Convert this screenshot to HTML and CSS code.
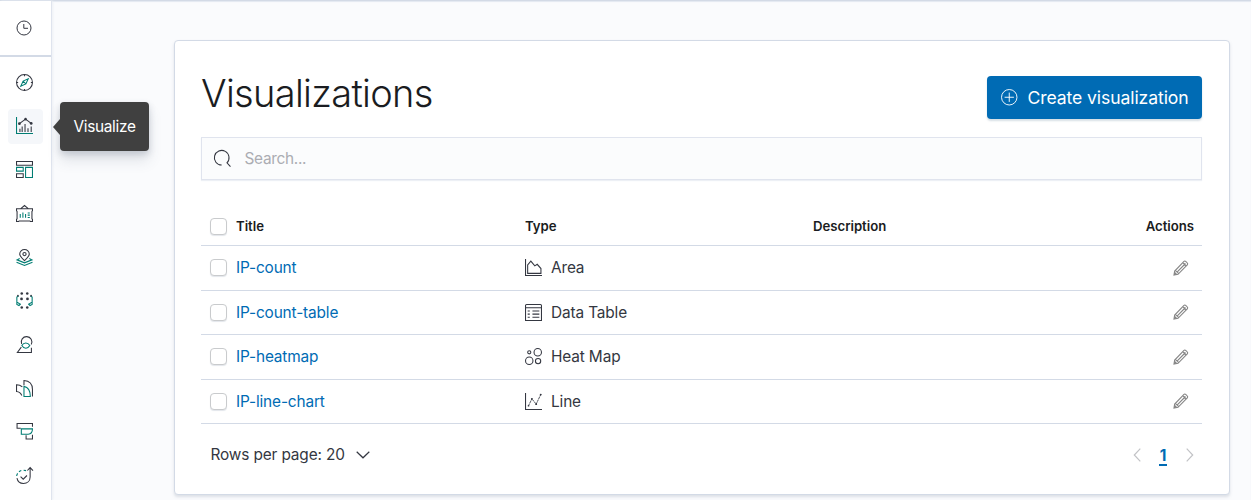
FILE: index.html
```html
<!DOCTYPE html>
<html lang="en">
<head>
<meta charset="utf-8">
<title>Visualizations</title>
<link rel="stylesheet" href="styles.css">
</head>
<body>
<div class="app">
  <nav class="sidebar">
    <div class="recent"><svg class="icon clock" viewBox="0 0 16 16"><circle cx="8" cy="8" r="7"/><path d="M7.800 4v4.300H12"/></svg></div>
    <div class="nav-list">
      <a class="nav-item"><svg class="icon" viewBox="0 0 16 16"><circle cx="8" cy="8" r="7.500"/><path d="M8 .5V2M8 14v1.500M.5 8H2M14 8h1.500"/><path class="accent" d="M11.500 4.500 9.300 9.300 4.500 11.500 6.700 6.700zM6.700 6.700l2.600 2.600"/></svg></a>
      <a class="nav-item active"><svg class="icon" viewBox="0 0 16 16"><path class="accent" d="M.5 0v15.500H16"/><path d="M3.700 11V14M8.500 6.500V14M5.800 9v5M11.300 10.500V14M14.300 9v5M3.200 6.300 9 2l5.300 4"/><g class="dots"><circle cx="3.200" cy="6.300" r="1.300"/><circle cx="9" cy="2" r="1.200"/><circle cx="14.300" cy="6" r="1.300"/></g></svg>
        <span class="tooltip">Visualize</span></a>
      <a class="nav-item"><svg class="icon" viewBox="0 0 16 16"><path d="M.5.500h15v3.500H.5zM.5 12h6.300v3.500H.5z"/><path class="accent" d="M.5 6h6.300v3.500H.5zM9 6h6.500v9.500H9z"/></svg></a>
      <a class="nav-item"><svg class="icon" viewBox="0 0 16 16"><path d="M.5 3.500h15v2L15 6v7l.5.500v2h-2L13 15H3l-.5.500h-2v-2L1 13V6l-.5-.5zM4.500 3.500 8 .5l3.500 3"/><path class="accent" d="M4 8.500V12M6.500 7v5M9 8.500V12M11 7.500h2M11 9.500h2M11 11.700h2"/></svg></a>
      <a class="nav-item"><svg class="icon" viewBox="0 0 16 16"><path d="M8 11C5.500 8.500 3.500 7 3.500 4.800a4.500 4.300 0 0 1 9 0C12.500 7 10.500 8.500 8 11z"/><circle cx="8" cy="4.800" r="1.500"/><path class="accent" d="M3.500 9 1 10.200 8 13l7-2.800L12.500 9M.5 12.500 8 15.500l7.500-3"/></svg></a>
      <a class="nav-item"><svg class="icon" viewBox="0 0 16 16"><path class="accent" d="M2.500 3.700.8 4.700v7l2 1 1.700-1.500M13.500 3.700l1.700 1v7l-2 1-1.700-1.500M1 9.500l3 2M15 9.500l-3 2"/><g class="dots"><circle cx="5.400" cy="1.400" r="1.200"/><circle cx="10.600" cy="1.400" r="1.200"/><circle cx="5.200" cy="6.500" r="1.300"/><circle cx="10.800" cy="6.500" r="1.300"/><circle cx="5.400" cy="14.500" r="1.200"/><circle cx="10.600" cy="14.500" r="1.200"/><circle cx="1.800" cy="3.500" r=".8"/><circle cx="14.200" cy="3.500" r=".8"/></g></svg></a>
      <a class="nav-item"><svg class="icon" viewBox="0 0 16 16"><path d="M5.300 7.500A5 5 0 1 1 14.300 8M5 10.500l-3.700 5h13.200V11"/><path class="accent" d="M5.500 9c1-1.700 2.300-2.500 3.700-2.500S12 7.300 13 9c-1 1.800-2.300 2.500-3.700 2.500S6.500 10.800 5.500 9z"/></svg></a>
      <a class="nav-item"><svg class="icon" viewBox="0 0 16 16"><path d="M5.500 14.500C4.500 12.300 2.700 11 .5 10.800V4.500c2.300 0 4 .7 5.500 2M7.500 5V.5c5 .3 8 3.500 8 8.500v6.500"/><path class="accent" d="M7.500 6c3.800.8 6 4 6 9.500h-6z"/></svg></a>
      <a class="nav-item"><svg class="icon" viewBox="0 0 16 16"><path d="M15.500 3.500V.5H1v4.500h3.500M9.500 11.500v3.500h6v-4"/><path class="accent" d="M5 5.500h10.500C15.500 8.500 14 10.500 11.500 10.500H5z"/></svg></a>
      <a class="nav-item"><svg class="icon" viewBox="0 0 16 16"><path d="M.9 10.500A6.200 6.200 0 0 0 7 15.500c3.700 0 6.300-2.500 6.300-6V.5M10.700 3.300 13.300.5 16 3.300M4.300 9l2.500 2.500L10.300 8"/><path class="accent" d="M.6 8.500A6 6 0 0 1 1.500 6M2.800 4.600A6 6 0 0 1 5 3.300M7.200 3l2.300.4"/></svg></a>
    </div>
  </nav>
  <main class="page">
    <section class="panel">
      <header class="panel-head">
        <h1>Visualizations</h1>
        <button class="create"><svg class="icon" viewBox="0 0 16 16"><circle cx="8" cy="8" r="7.500"/><path d="M8 3.500v9M3.500 8h9"/></svg><span>Create visualization</span></button>
      </header>
      <label class="search"><svg class="icon" viewBox="0 0 16 16"><path d="M7.200 14.200A6.900 6.900 0 1 1 12.200 12.100L15.500 15.700"/></svg><span>Search...</span></label>
      <div class="table">
        <div class="row head"><i class="check"></i><span>Title</span><span>Type</span><span>Description</span><span class="actions">Actions</span></div>
        <div class="row"><i class="check"></i><a>IP-count</a><span class="type"><svg class="icon" viewBox="0 0 16 16"><path d="M.5 0v15.500H16M2.500 13.500v-8l3-3.500 3.700 4.500L11.500 5l3.500 4v4.500z"/></svg><span>Area</span></span><span></span><svg class="icon pencil" viewBox="0 0 16 16"><path d="M1 15l.7-4L11 1.300c1-1 4.500 2 3.500 3.400L5 14.300zM3.800 12.300l8.700-8.800M2.500 10.300l3.200 3.300M9.800 2.700l3.500 3.500"/><path class="tip" d="m1 15 .5-3.500 3 3z"/></svg></div>
        <div class="row"><i class="check"></i><a>IP-count-table</a><span class="type"><svg class="icon" viewBox="0 0 16 16"><path d="M1.500.500h13a1 1 0 0 1 1 1v14H.5v-14a1 1 0 0 1 1-1zM.5 3.500h15M2.500 6.500h2M7 6.500h6.500M2.500 9.500h2M7 9.500h6.500M2.500 12.500h2M7 12.500h6.500"/></svg><span>Data Table</span></span><span></span><svg class="icon pencil" viewBox="0 0 16 16"><path d="M1 15l.7-4L11 1.300c1-1 4.500 2 3.500 3.400L5 14.300zM3.800 12.300l8.700-8.800M2.500 10.300l3.200 3.300M9.800 2.700l3.500 3.500"/><path class="tip" d="m1 15 .5-3.500 3 3z"/></svg></div>
        <div class="row"><i class="check"></i><a>IP-heatmap</a><span class="type"><svg class="icon" viewBox="0 0 16 16"><circle cx="4" cy="4" r="1.500"/><circle cx="12" cy="4" r="3.500"/><circle cx="4" cy="12" r="3.500"/><circle cx="12.300" cy="12.300" r="2.500"/></svg><span>Heat Map</span></span><span></span><svg class="icon pencil" viewBox="0 0 16 16"><path d="M1 15l.7-4L11 1.300c1-1 4.500 2 3.500 3.400L5 14.300zM3.800 12.300l8.700-8.800M2.500 10.300l3.200 3.300M9.800 2.700l3.500 3.500"/><path class="tip" d="m1 15 .5-3.500 3 3z"/></svg></div>
        <div class="row"><i class="check"></i><a>IP-line-chart</a><span class="type"><svg class="icon" viewBox="0 0 16 16"><path d="M.5 0v15.500H16"/><path class="trend" d="M3.300 12l3.200-6.500 4 5L14.800 1.500"/><g class="dots"><circle cx="3.300" cy="12" r=".8"/><circle cx="6.500" cy="5.500" r=".9"/><circle cx="10.500" cy="10.500" r=".9"/><circle cx="14.800" cy="1.500" r=".9"/></g></svg><span>Line</span></span><span></span><svg class="icon pencil" viewBox="0 0 16 16"><path d="M1 15l.7-4L11 1.300c1-1 4.500 2 3.500 3.400L5 14.300zM3.800 12.300l8.700-8.800M2.500 10.300l3.200 3.300M9.800 2.700l3.500 3.500"/><path class="tip" d="m1 15 .5-3.500 3 3z"/></svg></div>
      </div>
      <footer class="pager">
        <span>Rows per page: 20</span>
        <svg class="chev down" viewBox="0 0 14 8"><path d="m.7.800 6.300 6 6.300-6"/></svg>
        <svg class="chev prev" viewBox="0 0 8 14"><path d="m7.300.700-6 6.300 6 6.300"/></svg>
        <b>1</b>
        <svg class="chev next" viewBox="0 0 8 14"><path d="m.7.700 6 6.300-6 6.300"/></svg>
      </footer>
    </section>
  </main>
</div>
</body>
</html>
```
FILE: styles.css
```css
* { box-sizing: border-box; }
body {
  margin: 0;
  height: 500px;
  overflow: hidden;
  background: #fafbfd;
  color: #343741;
  font: 400 15.4px/24px Inter, "Liberation Sans", sans-serif;
  letter-spacing: -.14px;
}
.app { display: flex; height: 500px; border-top: 1px solid #d3dae6; box-shadow: inset 0 1px 1px #e3e8f1; }
.icon { width: 17px; height: 17px; flex: none; fill: none; stroke: #343741; stroke-width: 1; overflow: visible; }
.icon .accent { stroke: #017d73; }
.icon .dots { fill: #343741; stroke: none; }
.icon .trend { stroke-width: .8; stroke-dasharray: 2.200 .5; }

.sidebar { width: 52px; background: #fff; border-right: 1px solid #dfe4ee; box-shadow: 1px 0 2px #edf0f5; }
.recent { height: 56px; border-bottom: 2px solid #d3dae6; display: flex; align-items: center; padding: 0 0 1px 16px; }
.clock { width: 16px; height: 16px; }
.nav-list { display: flex; flex-direction: column; gap: 8.700px; padding: 8.300px 0 0 8px; }
.nav-item { position: relative; display: flex; align-items: center; justify-content: center; width: 35px; height: 35px; flex: none; padding: 0 2px 1px 0; border-radius: 4px; }
.active { background: #f5f7fa; }
.tooltip {
  position: absolute;
  z-index: 2;
  left: 52px;
  top: -7px;
  width: 89px;
  height: 49px;
  border-radius: 4px;
  background: #404040;
  color: #fff;
  letter-spacing: -.3px;
  line-height: 50px;
  text-align: center;
  box-shadow: 0 10px 14px rgba(65, 78, 101, .13), 0 3px 7px rgba(65, 78, 101, .22);
}
.tooltip::before { content: ""; position: absolute; left: -7px; top: 17px; border: solid transparent; border-width: 8px 7px 8px 0; border-right-color: #404040; }

.page { flex: 1; padding: 39px 21px 0 122px; }
.panel { height: 455px; padding: 35px 27px 0 26px; background: #fff; border: 1px solid #d3dae6; border-radius: 4px; box-shadow: 0 2px 3px rgba(152, 162, 179, .3); }
.panel-head { display: flex; justify-content: space-between; height: 61px; }
h1 { margin: -3px 0 0; font-size: 38px; line-height: 40px; font-weight: 300; letter-spacing: -.68px; color: #1a1c21; }
.create { display: flex; align-items: center; gap: 10px; width: 215px; height: 43px; padding: 0 0 0 14px; border: 0; border-radius: 4px; background: #006bb4; color: #fff; font: 400 17.600px/24px Inter, sans-serif; letter-spacing: -.1px; box-shadow: 0 2px 2px rgba(54, 97, 126, .2); }
.create .icon { width: 16.500px; height: 16.500px; stroke: #fff; stroke-width: .9; }
.search { display: flex; align-items: center; gap: 13.500px; height: 43px; padding-left: 12px; border: 1px solid #e0e4ee; background: #fbfcfd; color: #abadb3; letter-spacing: -.3px; box-shadow: 0 1px 1px #edf0f5; }

.table { margin-top: 27px; }
.row { display: grid; grid-template-columns: 35px 289px 288px 1fr auto; align-items: center; height: 44.500px; border-bottom: 1px solid #d3dae6; }
.head { height: 39px; font-size: 13.200px; font-weight: 600; letter-spacing: -.03px; color: #1a1c21; }
.check { width: 17px; height: 17px; margin-left: 9px; border: 1px solid #c9cbcd; border-radius: 4px; background: #fff; box-shadow: 0 1px 1px #e3e6eb; }
.row a { padding-top: 1px; color: #006bb4; }
.type { display: flex; align-items: center; gap: 9px; }
.type span { padding-top: 1px; }
.actions { margin-right: 8px; }
.pencil { width: 16px; height: 16px; margin-right: 13px; stroke: #868686; stroke-width: 1.150; }
.pencil .tip { fill: #868686; stroke: none; }

.pager { display: flex; align-items: center; height: 62px; padding: 0 8px 0 9.500px; }
.chev { fill: none; stroke: #343741; stroke-width: 1.200; }
.down { width: 14px; height: 8px; margin: 0 auto 0 11px; }
.prev, .next { width: 8px; height: 14px; stroke: #c2c3c6; }
.pager b { margin: 3px 19px 0 18px; width: 8px; text-align: center; line-height: 17px; border-bottom: 2px solid #006bb4; color: #006bb4; font-weight: 700; }
```
